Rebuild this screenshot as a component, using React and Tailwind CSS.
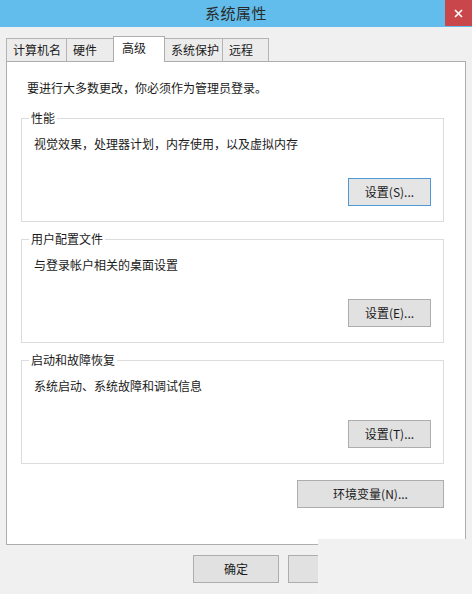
import React from 'react';

const font = { fontFamily: '"Noto Sans CJK SC", "Liberation Sans", sans-serif' };

const tabs = [
  { label: '计算机名', w: 'w-[61px]' },
  { label: '硬件', w: 'w-[48px]' },
  { label: '高级', w: 'w-[52px]', active: true },
  { label: '系统保护', w: 'w-[59px]' },
  { label: '远程', w: 'w-[47px]' },
];

function Btn({ children, className = '', primary }) {
  return (
    <div
      className={`h-[28px] flex items-center justify-center border text-[12px] text-[#1a1a1a] ${
        primary ? 'border-[#4f98d6] bg-[#e5e5e5]' : 'border-[#adadad] bg-[#e1e1e1]'
      } ${className}`}
    >
      {children}
    </div>
  );
}

function GroupBox({ title, desc, button }) {
  return (
    <div className="relative h-[104px] border border-[#dcdcdc] flex flex-col">
      <span className="absolute -top-[9px] left-[7px] bg-white px-[2px] text-[12px] leading-[16px] text-[#1a1a1a]">
        {title}
      </span>
      <p className="pl-[12px] pt-[17px] text-[12px] leading-[16px] text-[#1a1a1a]">{desc}</p>
      <div className="flex justify-end pr-[12px] mt-[26px]">
        <Btn primary={button.primary} className="w-[83px]">{button.label}</Btn>
      </div>
    </div>
  );
}

export default function App() {
  return (
    <div className="relative w-[472px] h-[594px] bg-[#f0f0f0] overflow-hidden" style={font}>
      {/* title bar */}
      <div className="relative h-[27px] bg-[#62bdec] flex items-center justify-center">
        <span className="text-[15px] text-[#2a2a2a] tracking-[0.5px]">系统属性</span>
        <div className="absolute right-0 top-0 w-[27px] h-[26px] bg-[#c9474b] flex items-center justify-center">
          <svg width="9" height="9" viewBox="0 0 9 9">
            <path d="M1 1L8 8M8 1L1 8" stroke="#fff" strokeWidth="1.6" />
          </svg>
        </div>
      </div>

      {/* tabs */}
      <div className="flex items-end pl-[6px] mt-[10px] h-[24px] relative z-10">
        {tabs.map((t, i) =>
          t.active ? (
            <div
              key={t.label}
              className={`${t.w} relative z-10 -ml-px h-[26px] -mb-px bg-white border border-b-0 border-[#adadad] text-[12px] text-[#1a1a1a] pl-[8px] pt-[3px] leading-[16px]`}
            >
              {t.label}
            </div>
          ) : (
            <div
              key={t.label}
              className={`${t.w} ${i === 0 ? '' : '-ml-px'} h-[23px] bg-[#ececec] border border-b-0 border-[#b4b4b4] text-[12px] text-[#1a1a1a] pl-[6px] pt-[3px] leading-[16px]`}
            >
              {t.label}
            </div>
          )
        )}
      </div>

      {/* panel */}
      <div className="mx-[6px] h-[484px] bg-white border border-[#adadad] flex flex-col">
        <p className="pl-[20px] pt-[18px] text-[12px] leading-[16px] text-[#1a1a1a]">
          要进行大多数更改，你必须作为管理员登录。
        </p>
        <div className="pl-[14px] pr-[21px] mt-[22px] flex flex-col gap-[17px]">
          <GroupBox
            title="性能"
            desc="视觉效果，处理器计划，内存使用，以及虚拟内存"
            button={{ label: '设置(S)...', primary: true }}
          />
          <GroupBox
            title="用户配置文件"
            desc="与登录帐户相关的桌面设置"
            button={{ label: '设置(E)...' }}
          />
          <GroupBox
            title="启动和故障恢复"
            desc="系统启动、系统故障和调试信息"
            button={{ label: '设置(T)...' }}
          />
          <div className="flex justify-end -mt-[1px]">
            <Btn className="w-[147px]">环境变量(N)...</Btn>
          </div>
        </div>
      </div>

      {/* dialog buttons */}
      <div className="flex pl-[193px] gap-[9px] mt-[10px]">
        <Btn className="w-[86px]">确定</Btn>
        <Btn className="w-[86px]">取消</Btn>
        <Btn className="w-[86px]">应用(A)</Btn>
      </div>

      {/* covering patch */}
      <div className="absolute left-[318px] top-[539px] right-0 bottom-0 bg-[#f1f1f1]" />
    </div>
  );
}
